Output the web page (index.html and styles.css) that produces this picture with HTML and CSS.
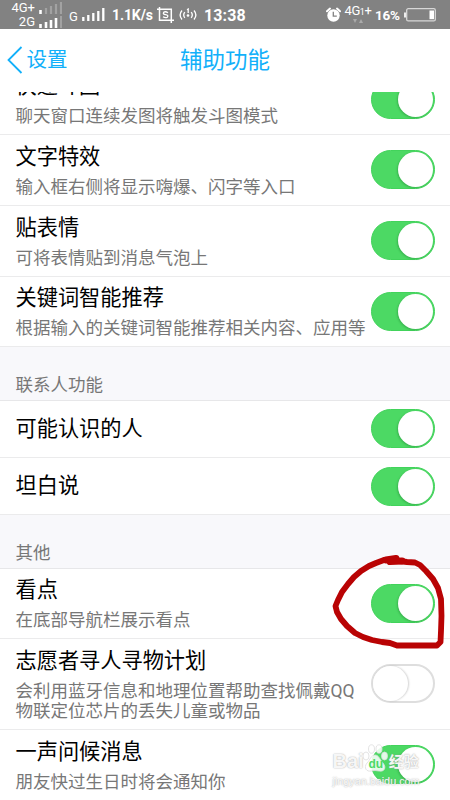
FILE: index.html
```html
<!DOCTYPE html>
<html lang="zh-CN">
<head>
<meta charset="utf-8">
<title>辅助功能</title>
<link rel="stylesheet" href="styles.css">
</head>
<body>
<div class="screen">
  <div class="status">
    <div class="sims">
      <div class="sim"><span>4G+</span><svg width="23" height="14" viewBox="0 0 23 14"><path d="M1.5 9v4" stroke="#fff" stroke-width="2.6"/><path d="M7 7v6M12 5v8M17 3v10M22 1v12" stroke="#a2a2a2" stroke-width="2.2"/></svg></div>
      <div class="sim"><span>2G</span><svg width="23" height="13" viewBox="0 0 23 13"><path d="M1.5 8v4M7 6v6M12 4v8M17 2v10" stroke="#fff" stroke-width="2.6"/><path d="M22 0v12" stroke="#a2a2a2" stroke-width="2"/></svg></div>
    </div>
    <span class="gprs">G</span>
    <svg class="signal" width="23" height="14" viewBox="0 0 23 14"><path d="M1.3 9v4M6.3 7v6M11.3 5v8M16.3 3v10M21.3 0v13" stroke="#fff" stroke-width="2.3"/></svg>
    <b class="speed">1.1K/s</b>
    <svg class="crop" width="18" height="16" viewBox="0 0 18 16" fill="none" stroke="#fff" stroke-width="1.5"><path d="M0 2.3h14.3V16M2.5 0v13.3H17"/><path d="M11 5.8Q8.5 4 6.7 5.3 5.500 7 8.500 7.700 12 8.500 10.300 10.200 8.300 11.300 6 9.700" stroke-width="1.3"/></svg>
    <svg class="hotspot" width="18" height="14" viewBox="0 0 18 14" fill="none" stroke="#fff" stroke-width="1.3"><path d="M3 2.500q-3.800 4.500 0 9M5.800 4.200q-2.200 2.800 0 5.600M15 2.500q3.800 4.500 0 9M12.200 4.200q2.200 2.800 0 5.600"/><path d="M8 1.700l1.200-.7v4"/><circle cx="9" cy="7.500" r="1.300" fill="#fff" stroke="none"/></svg>
    <b class="clock">13:38</b>
    <svg class="alarm" width="15" height="16" viewBox="0 0 15 16"><circle cx="7.5" cy="8.5" r="6.2" fill="#fff"/><path d="M1 4.3l3-2.7M14 4.3l-3-2.7" stroke="#fff" stroke-width="2" stroke-linecap="round"/><path d="M7.3 4.8v4.4h3.5" fill="none" stroke="#828282" stroke-width="1.3"/></svg>
    <div class="net"><span>4G<small>1</small>+</span><svg width="10" height="5" viewBox="0 0 10 5"><path d="M0 0h4L2 4zM6 4h4L8 0z" fill="#aaa"/></svg></div>
    <b class="percent">16%</b>
    <svg class="battery" width="32" height="14" viewBox="0 0 32 14"><rect x="2.7" y=".7" width="28.6" height="12.2" rx="1.5" fill="none" stroke="#d8d8d8" stroke-width="1.3"/><path d="M1 4.5v5" stroke="#eee" stroke-width="2"/><path d="M25.5 2.5h4.5v8.7h-4.5z" fill="#fff"/></svg>
  </div>
  <div class="nav">
    <div class="back"><svg width="16" height="28" viewBox="0 0 16 28"><path d="M14.5 1L1.500 14l13 13" fill="none" stroke="#12b0fa" stroke-width="1.8"/></svg><span>设置</span></div>
    <div class="heading">辅助功能</div>
  </div>
  <div class="list">
    <div class="row first"><div class="text"><div class="title">快速斗图</div><div class="sub">聊天窗口连续发图将触发斗图模式</div></div><i class="toggle"></i></div>
    <div class="row"><div class="text"><div class="title">文字特效</div><div class="sub">输入框右侧将显示嗨爆、闪字等入口</div></div><i class="toggle"></i></div>
    <div class="row"><div class="text"><div class="title">贴表情</div><div class="sub">可将表情贴到消息气泡上</div></div><i class="toggle"></i></div>
    <div class="row"><div class="text"><div class="title">关键词智能推荐</div><div class="sub">根据输入的关键词智能推荐相关内容、应用等</div></div><i class="toggle"></i></div>
    <div class="section">联系人功能</div>
    <div class="row single"><div class="text"><div class="title">可能认识的人</div></div><i class="toggle"></i></div>
    <div class="row single"><div class="text"><div class="title">坦白说</div></div><i class="toggle"></i></div>
    <div class="section">其他</div>
    <div class="row marked"><div class="text"><div class="title">看点</div><div class="sub">在底部导航栏展示看点</div></div><i class="toggle"></i>
      <svg class="scribble" width="120" height="100" viewBox="330 550 120 100" fill="none" stroke="#b90304" stroke-linejoin="round" stroke-linecap="round"><path stroke-width="5.8" d="M384 559L376 562L369 565L361 570L354 576L348 583L342 591L338 599L335.5 605L337 611L341 618L347 625L355 632L363 636L372 639L382 641L390 642L397 644.5L437 644.5L440.5 641L441 630L441.5 615L441 598L438 587L433 578L426 570L420 564L415 561.5L407 561L399 560L390 559L384 559"/><path stroke-width="7" d="M386 559L396 557.5M390 560.5L402 560"/></svg>
    </div>
    <div class="row double"><div class="text"><div class="title">志愿者寻人寻物计划</div><div class="sub">会利用蓝牙信息和地理位置帮助查找佩戴QQ<br>物联定位芯片的丢失儿童或物品</div></div><i class="toggle off"></i></div>
    <div class="row marked"><div class="text"><div class="title">一声问候消息</div><div class="sub">朋友快过生日时将会通知你</div></div><i class="toggle"></i>
      <div class="watermark"><div class="brand"><span>Bai</span><svg width="26" height="28" viewBox="0 0 26 28"><g fill="#fff" fill-opacity=".85" stroke="#ddd" stroke-width=".8"><ellipse cx="4" cy="12" rx="3" ry="4"/><ellipse cx="9.5" cy="5" rx="3" ry="4.2"/><ellipse cx="17" cy="5" rx="3" ry="4.2"/><ellipse cx="22.5" cy="12" rx="3" ry="4"/><path d="M13 11c-4 0-5 5-8 8-4 5 0 9 4 8q4-1 8 0c5 1 8-3 4-8-3-3-4-8-8-8z"/></g><text x="6.5" y="24" class="du">du</text></svg><span class="exp">经验</span></div><div class="site">jingyan.baidu.com</div></div>
    </div>
  </div>
</div>
</body>
</html>
```

FILE: styles.css
```css
* { box-sizing: border-box; }
body { margin: 0; background: #fff; font-family: Roboto, "Noto Sans CJK SC", sans-serif; }
.screen { width: 450px; height: 800px; overflow: hidden; display: flex; flex-direction: column; }
.status { height: 29px; flex: none; background: #828282; color: #fff; display: flex; align-items: center; }
.status svg { flex: none; display: block; }
.sims { width: 62px; flex: none; padding-top: 1px; }
.sim { height: 14px; display: flex; justify-content: flex-end; align-items: center; gap: 4px; font-size: 13px; line-height: 14px; }
.gprs { font-size: 13px; margin: 3px 0 0 7px; width: 9px; }
.signal { margin-left: 4px; }
.speed { font-size: 14px; letter-spacing: -.1px; width: 42px; margin-left: 7px; white-space: nowrap; margin-top: 1px; }
.crop { margin-left: 3px; }
.hotspot { margin-left: 4px; }
.clock { font-size: 16px; width: 45px; margin-left: 7px; letter-spacing: .1px; margin-top: 2px; }
.alarm { margin-left: 77px; }
.net { width: 28px; margin-left: 3px; font-size: 13px; line-height: 14px; letter-spacing: -.4px; display: flex; flex-direction: column; align-items: center; white-space: nowrap; padding-bottom: 1px; }
.net small { font-size: 9px; }
.percent { font-size: 13.5px; width: 26px; margin-left: 3px; letter-spacing: -.2px; margin-top: 1px; }
.battery { margin-left: 3px; }
.nav { height: 63px; flex: none; display: grid; grid-template-columns: 90px 1fr 90px; align-items: center; color: #12b0fa; padding-bottom: 1px; }
.back { display: flex; align-items: center; gap: 3.5px; padding-left: 7px; font-size: 20.5px; line-height: 30px; }
.heading { text-align: center; font-size: 22.5px; line-height: 30px; }
.list { flex: 1; min-height: 0; overflow: hidden; }
.row { height: 70.7px; border-bottom: 1.5px solid #ebebec; padding: 5px 15px 0 15.5px; display: grid; grid-template-columns: 1fr 64px; align-items: start; }
.row.first { margin-top: -27.3px; }
.text { white-space: nowrap; min-width: 0; width: 0; }
.title { font-size: 21.2px; line-height: 30px; color: #000; padding-top: 1.7px; }
.sub { font-size: 17.5px; line-height: 20.5px; margin-top: 5px; color: #777; }
.section { height: 53.4px; background: #f8f8fb; border-bottom: 1.5px solid #e7e7e9; padding: 26.8px 15.5px 0; font-size: 17.5px; line-height: 22px; color: #777; }
.row.single { height: 57.2px; padding-top: 11.5px; }
.row.double { height: 90.6px; }
.toggle { display: block; width: 64px; height: 39px; margin-top: 10px; border-radius: 20px; background: #4cd964; border: 1px solid #42d35b; padding: 1px 1px 1px 26px; }
.toggle::before { content: ""; display: block; width: 35px; height: 35px; border-radius: 50%; background: #fff; box-shadow: -1px 1px 2px rgba(0,80,20,.25); }
.single .toggle { margin-top: -3px; }
.double .toggle { margin-top: 20px; }
.toggle.off { background: #fff; border: 2px solid #dedede; padding: 0; }
.toggle.off::before { box-shadow: 1px 0 2px rgba(0,0,0,.18); }
.marked { position: relative; }
.scribble { position: absolute; left: 330px; top: -18px; }
.watermark { position: absolute; left: 332.5px; top: 13px; width: 92px; color: rgba(255,255,255,.93); text-shadow: 0 0 1.5px #999; font-family: "Liberation Sans", "Noto Sans CJK SC", sans-serif; }
.brand { display: flex; align-items: flex-end; height: 31px; font-size: 20px; font-weight: bold; line-height: 25px; }
.brand svg { flex: none; margin: 0 0 2px -2px; }
.du { font-size: 12px; fill: #4cd964; font-weight: bold; text-shadow: none; }
.exp { font-size: 15px; line-height: 25px; margin-left: 1px; white-space: nowrap; }
.site { font-size: 10.8px; line-height: 12px; white-space: nowrap; margin-top: 1px; }
```
